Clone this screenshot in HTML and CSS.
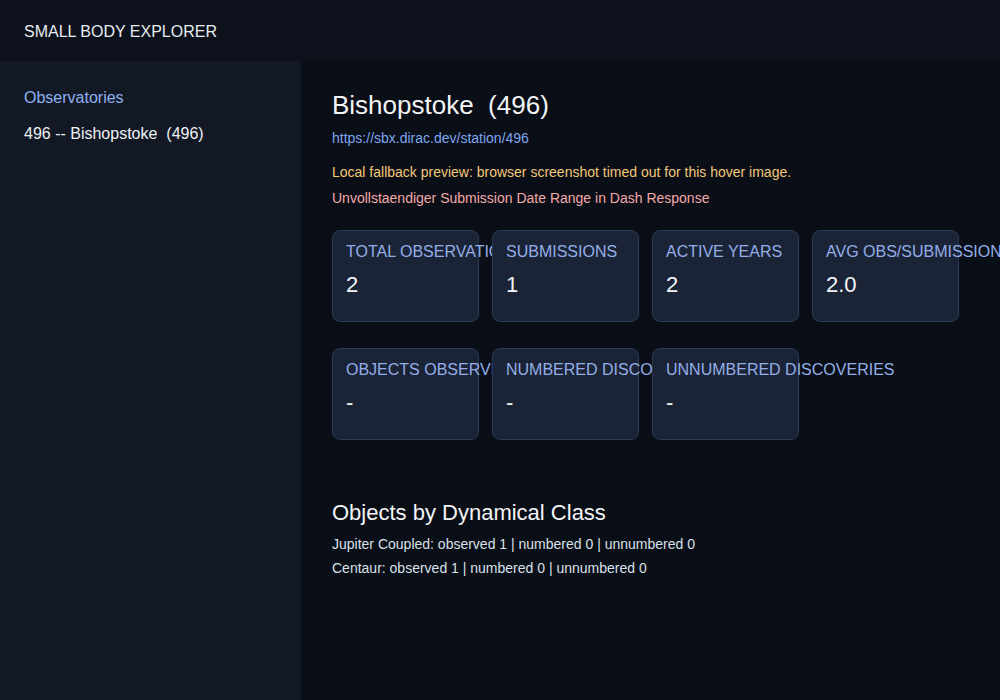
FILE: index.html
```html
<html>
	<head>
		<link rel="stylesheet" href="styles.css">
	</head>

	<body>
		<div class="header">SMALL BODY EXPLORER</div>

		<div class="layout">
			<div class="sidebar">
				<div class="side-title">Observatories</div>
				<div class="side-item">496 -- Bishopstoke&nbsp; (496)</div>
			</div>

			<div class="main">
				<h1>Bishopstoke&nbsp; (496)</h1>
				<a class="link" href="#">https://sbx.dirac.dev/station/496</a>
				<p class="warn">Local fallback preview: browser screenshot timed out for this hover image.</p>
				<p class="error">Unvollstaendiger Submission Date Range in Dash Response</p>

				<div class="cards">
					<div class="card"><div class="label">Total Observations</div><div class="value">2</div></div>
					<div class="card"><div class="label">Submissions</div><div class="value">1</div></div>
					<div class="card"><div class="label">Active Years</div><div class="value">2</div></div>
					<div class="card"><div class="label">Avg Obs/Submission</div><div class="value">2.0</div></div>
				</div>

				<div class="cards">
					<div class="card"><div class="label">Objects Observed</div><div class="value">-</div></div>
					<div class="card"><div class="label">Numbered Discoveries</div><div class="value">-</div></div>
					<div class="card"><div class="label">Unnumbered Discoveries</div><div class="value">-</div></div>
				</div>

				<h2>Objects by Dynamical Class</h2>
				<p class="row">Jupiter Coupled: observed 1 | numbered 0 | unnumbered 0</p>
				<p class="row">Centaur: observed 1 | numbered 0 | unnumbered 0</p>
			</div>
		</div>
	</body>
</html>
```

FILE: styles.css
```css
*{
	margin:0;
	padding:0;
	box-sizing:border-box;
}
body{
	font-family:"Liberation Sans", Arial, sans-serif;
	background:#0a0e16;
	color:#e5e7eb;
	height:700px;
	overflow:hidden;
}
.header{
	height:61px;
	line-height:63px;
	overflow:hidden;
	padding-left:24px;
	font-size:16px;
	background:#0c111b;
	color:#e8ebf0;
}
.layout{
	display:flex;
	height:639px;
}
.sidebar{
	width:301px;
	background:#131924;
	padding:28px 24px;
}
.side-title{
	font-size:16px;
	color:#8fb1f2;
	margin-bottom:18px;
}
.side-item{
	font-size:16px;
	color:#eef1f5;
}
.main{
	flex:1;
	padding:30px 31px;
}
h1{
	font-size:26px;
	font-weight:normal;
	color:#f3f4f6;
	line-height:28px;
}
.link{
	display:block;
	margin-top:11px;
	font-size:14px;
	color:#7ea6f0;
	text-decoration:none;
}
.warn{
	margin-top:18px;
	font-size:14px;
	color:#f2c879;
}
.error{
	margin-top:10px;
	font-size:14px;
	color:#f4a9a9;
}
.cards{
	display:flex;
	gap:13px;
	margin-top:24px;
}
.cards + .cards{
	margin-top:26px;
}
.card{
	width:147px;
	height:92px;
	background:#1b2436;
	border:1px solid #293a56;
	border-radius:8px;
	padding:12px 13px;
}
.label{
	font-size:16px;
	color:#93aee8;
	text-transform:uppercase;
	white-space:nowrap;
}
.value{
	margin-top:11px;
	font-size:22px;
	color:#f3f4f6;
}
h2{
	margin-top:60px;
	font-size:22px;
	font-weight:normal;
	color:#f3f4f6;
}
.row{
	font-size:14px;
	color:#d9e0ea;
	margin-top:8px;
}
h2 + .row{
	margin-top:10px;
}
```
